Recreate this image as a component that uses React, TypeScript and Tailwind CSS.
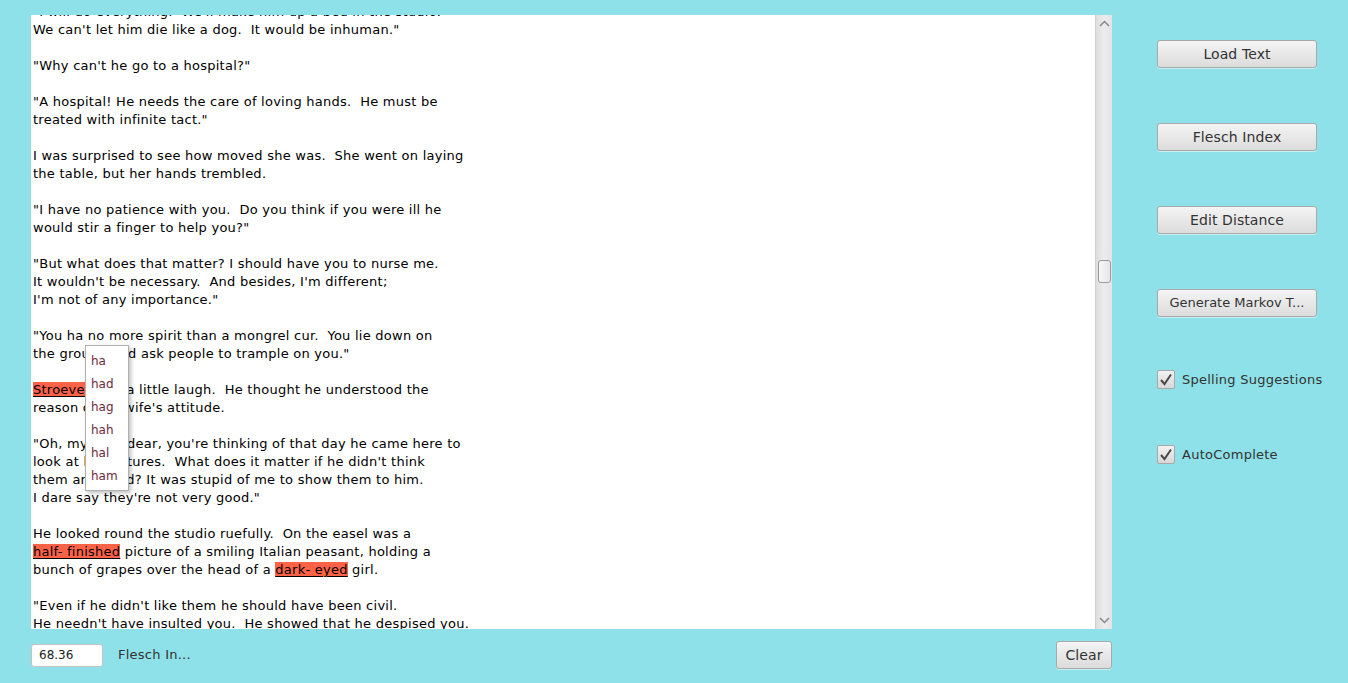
import React from 'react';

const font = { fontFamily: '"DejaVu Sans", Verdana, sans-serif' };

type Seg = string | { bad: string };

const lines: Seg[][] = [
  ['"I will do everything.  We\'ll make him up a bed in the studio.'],
  ['We can\'t let him die like a dog.  It would be inhuman."'],
  [''],
  ['"Why can\'t he go to a hospital?"'],
  [''],
  ['"A hospital! He needs the care of loving hands.  He must be'],
  ['treated with infinite tact."'],
  [''],
  ['I was surprised to see how moved she was.  She went on laying'],
  ['the table, but her hands trembled.'],
  [''],
  ['"I have no patience with you.  Do you think if you were ill he'],
  ['would stir a finger to help you?"'],
  [''],
  ['"But what does that matter? I should have you to nurse me.'],
  ['It wouldn\'t be necessary.  And besides, I\'m different;'],
  ['I\'m not of any importance."'],
  [''],
  ['"You ha no more spirit than a mongrel cur.  You lie down on'],
  ['the ground and ask people to trample on you."'],
  [''],
  [{ bad: 'Stroeve' }, ' gave a little laugh.  He thought he understood the'],
  ['reason of his wife\'s attitude.'],
  [''],
  ['"Oh, my poor dear, you\'re thinking of that day he came here to'],
  ['look at his pictures.  What does it matter if he didn\'t think'],
  ['them any good? It was stupid of me to show them to him.'],
  ['I dare say they\'re not very good."'],
  [''],
  ['He looked round the studio ruefully.  On the easel was a'],
  [{ bad: 'half- finished' }, ' picture of a smiling Italian peasant, holding a'],
  ['bunch of grapes over the head of a ', { bad: 'dark- eyed' }, ' girl.'],
  [''],
  ['"Even if he didn\'t like them he should have been civil.'],
  ['He needn\'t have insulted you.  He showed that he despised you.'],
  ['But you needn\'t have insulted him."'],
];

const suggestions = ['ha', 'had', 'hag', 'hah', 'hal', 'ham'];

const Button: React.FC<{ label: string; className?: string }> = ({ label, className }) => (
  <button
    className={`h-[28px] rounded-[3px] border border-[#a9a9a9] bg-gradient-to-b from-[#f4f4f4] to-[#dcdcdc] text-[#333] shadow-[0_1px_0_#ffffff80] ${className ?? 'text-[14px] tracking-[0.1px]'}`}
    style={font}
  >
    {label}
  </button>
);

const Check: React.FC<{ label: string; className?: string }> = ({ label, className }) => (
  <div className={`flex items-center gap-[7px] ${className ?? ''}`}>
    <div className="w-[18px] h-[19px] rounded-[2px] border border-[#a9a9a9] bg-gradient-to-b from-[#f2f2f2] to-[#d8d8d8] flex items-center justify-center">
      <svg width="14" height="13" viewBox="0 0 14 13">
        <path d="M2 7 L5.5 11 L12 1.5" fill="none" stroke="#4a4a4a" strokeWidth="2" />
      </svg>
    </div>
    <span className="text-[13px] tracking-[0.25px] text-[#333]" style={font}>{label}</span>
  </div>
);

export default function App() {
  return (
    <div className="w-full h-[683px] bg-[#8ee1e8] flex overflow-hidden" style={font}>
      {/* left column */}
      <div className="flex flex-col pl-[31px] pt-[15px] w-[1112px]">
        <div className="relative flex h-[614px] w-[1081px]">
          <div className="flex-1 bg-white overflow-hidden">
            <div className="-mt-[12px] pl-[2px] text-[13px] leading-[18px] tracking-[0.25px] text-black whitespace-pre">
              {lines.map((segs, i) => (
                <div key={i} className="h-[18px]">
                  {segs.map((s, j) =>
                    typeof s === 'string' ? (
                      <span key={j}>{s}</span>
                    ) : (
                      <span key={j} className="bg-[#ff6347] underline underline-offset-[2px]">{s.bad}</span>
                    )
                  )}
                </div>
              ))}
            </div>
          </div>
          {/* scrollbar */}
          <div className="w-[17px] bg-gradient-to-r from-[#dedede] via-[#ececec] to-[#e4e4e4] border-l border-[#d0d0d0] flex flex-col items-center">
            <svg width="11" height="7" viewBox="0 0 11 7" className="mt-[5px]">
              <path d="M1 6 L5.5 1.5 L10 6" fill="none" stroke="#888" strokeWidth="1.5" />
            </svg>
            <div className="mt-[233px] w-[13px] h-[23px] rounded-[3px] border border-[#9a9a9a] bg-gradient-to-r from-[#f8f8f8] to-[#e6e6e6]" />
            <div className="flex-1" />
            <svg width="11" height="7" viewBox="0 0 11 7" className="mb-[5px]">
              <path d="M1 1 L5.5 5.5 L10 1" fill="none" stroke="#888" strokeWidth="1.5" />
            </svg>
          </div>

          {/* autocomplete popup */}
          <div className="absolute left-[54px] top-[330px] w-[44px] h-[146px] bg-white border border-[#b0b0b0] shadow-[2px_2px_4px_rgba(0,0,0,0.25)] pt-[6px]">
            {suggestions.map((s) => (
              <div key={s} className="h-[23px] pl-[5px] text-[12px] leading-[18px] text-[#6b2a3c]">{s}</div>
            ))}
          </div>
        </div>

        {/* bottom row */}
        <div className="flex items-center mt-[12px] h-[28px]">
          <div className="w-[72px] h-[23px] bg-white border border-[#c4c4c4] rounded-[3px] pl-[7px] text-[12px] leading-[21px] text-[#222]">
            68.36
          </div>
          <span className="ml-[15px] text-[13px] tracking-[0.25px] leading-[18px] text-[#333]">Flesch In...</span>
          <div className="flex-1" />
          <Button label="Clear" className="w-[56px] text-[14px] tracking-[0.1px]" />
        </div>
      </div>

      {/* right column */}
      <div className="flex flex-col pl-[45px] pt-[40px]">
        <Button label="Load Text" className="w-[160px] text-[14px] tracking-[0.1px]" />
        <Button label="Flesch Index" className="w-[160px] mt-[55px] text-[14px] tracking-[0.1px]" />
        <Button label="Edit Distance" className="w-[160px] mt-[55px] text-[14px] tracking-[0.1px]" />
        <Button label="Generate Markov T..." className="w-[160px] mt-[55px] text-[13px]" />
        <Check label="Spelling Suggestions" className="mt-[53px]" />
        <Check label="AutoComplete" className="mt-[55px]" />
      </div>
    </div>
  );
}
